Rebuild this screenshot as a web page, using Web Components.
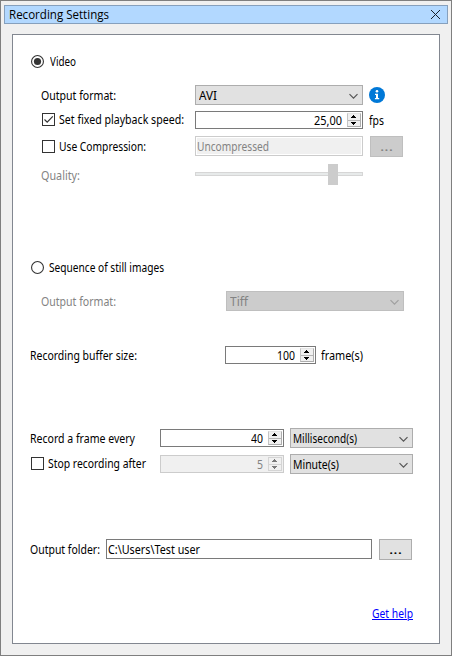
<!DOCTYPE html>
<html lang="en">
<head>
<meta charset="utf-8">
<title>Recording Settings</title>
<style>
html,body{margin:0;height:100%}
body{font:12px/14px "Noto Sans","Open Sans",sans-serif;color:#000;overflow:hidden}
</style>
</head>
<body>
<settings-window></settings-window>
<script>
const define = (name, html, init) => customElements.define(name, class extends HTMLElement {
  connectedCallback() {
    if (this.shadowRoot) return;
    const root = this.attachShadow({mode: 'open'});
    root.innerHTML = '<style>*{box-sizing:border-box}:host{box-sizing:border-box;flex:none}</style>' + html;
    if (this.hasAttribute('gap')) this.style.marginLeft = this.getAttribute('gap') + 'px';
    if (this.hasAttribute('drop')) this.style.marginTop = this.getAttribute('drop') + 'px';
    if (init) init(this, root);
  }
});
const size = el => { el.style.width = el.getAttribute('w') + 'px'; };

// Label condensed horizontally to fill its width.
define('ui-text', `<style>:host{display:block;white-space:pre;height:14px;line-height:14px}span{display:inline-block;transform-origin:0 0}
:host([off]){color:#838383}:host([link]){color:#00f}:host([link]) span{text-decoration:underline;text-underline-offset:1px;text-decoration-thickness:1px}</style><span><slot></slot></span>`, (el, root) => {
  const want = +el.getAttribute('w');
  if (!want) return;
  const span = root.querySelector('span');
  const have = span.getBoundingClientRect().width;
  span.style.transform = 'scaleX(' + want / have + ')';
  size(el);
});
define('ui-row', `<style>:host{display:flex;align-items:flex-start;height:var(--h);padding-left:var(--left)}</style><slot></slot>`);
define('ui-radio', `<style>:host{display:block;width:13px;height:13px}svg{display:block}circle.dot{display:none}:host([on]) .dot{display:block}</style>
<svg width="13" height="13"><circle cx="6.5" cy="6.5" r="5.95" fill="#fff" stroke="#333" stroke-width="1.1"/><circle class="dot" cx="6.5" cy="6.5" r="3.6" fill="#333"/></svg>`);
define('ui-check', `<style>:host{display:block;width:13px;height:13px;border:1px solid #333;background:#fff}svg{display:none}:host([on]) svg{display:block}</style>
<svg width="11" height="11"><path d="M1.5 5.5L4.2 8.2L9.8 2.4" fill="none" stroke="#333" stroke-width="1.2"/></svg>`);
define('ui-select', `<style>:host{display:flex;height:20px;border:1px solid #adadad;background:#e1e1e1;padding:3px 4px 0 2px;justify-content:space-between}
:host([off]){background:#ccc;border-color:#bfbfbf;color:#838383}svg{display:block;margin-top:4px}path{stroke:#555}:host([off]) path{stroke:#a0a0a0}</style>
<slot></slot><svg width="9" height="7"><path d="M.5 1.2L4.5 5.2L8.5 1.2" fill="none" stroke-width="1.2"/></svg>`, size);
define('ui-field', `<style>:host{display:block;height:20px;border:1px solid #7a7a7a;background:#fff;padding:3px 0 0 1px}
:host([off]){border-color:#ccc;background:#f0f0f0;box-shadow:inset 0 0 0 1px #fff;color:#838383}</style><slot></slot>`, size);
define('ui-spin', `<style>:host{display:flex;height:18px;border:1px solid #7a7a7a;background:#fff;justify-content:flex-end;padding:1px}
:host([off]){border-color:#ccc;background:#f0f0f0;color:#838383}
.v{margin:1px 5px 0 0}.b{width:14px;height:14px;background:#f0f0f0;border:1px solid #adadad;border-top-color:#e5e5e5;border-left-color:#c4c4c4}
:host([off]) .b{border-color:#d4d4d4}
svg{display:block}path{fill:#000}rect{fill:#b5b5b5}:host([off]) path{fill:#777}:host([off]) rect{fill:#d4d4d4}</style>
<div class="v"><slot></slot></div><div class="b"><svg width="12" height="12" shape-rendering="crispEdges"><path d="M5 1h1v1h1v1h1v1H3V3h1V2h1zM3 8h5v1H7v1H6v1H5v-1H4V9H3z"/><rect y="6" width="12" height="1"/></svg></div>`, size);
define('ui-button', `<style>:host{display:flex;width:33px;height:21px;border:1px solid #adadad;background:#e1e1e1;justify-content:center;padding-top:3px}
:host([off]){background:#ccc;border-color:#bfbfbf;color:#838383}</style><slot></slot>`);
define('ui-info', `<style>:host{display:block;width:16px;height:16px}svg{display:block}</style>
<svg width="16" height="16"><circle cx="8" cy="8" r="8" fill="#0078d7"/><circle cx="8" cy="4.3" r="1.3" fill="#fff"/><path d="M6 6.8h3v4.2h1.2v1.3H5.9V11H7V8H6z" fill="#fff"/></svg>`);
define('ui-slider', `<style>:host{display:grid;width:168px;height:21px;grid-template-columns:133px 10px 25px;align-items:start}
i{height:4px;margin-top:8px;background:#e7eaea;border:1px solid #d6d6d6}.l{border-right:0}.r{border-left:0}b{height:21px;background:#ccc}</style><i class="l"></i><b></b><i class="r"></i>`);
define('title-bar', `<style>:host{display:flex;justify-content:space-between;height:19px;border:1px solid #86a0bd;background:#b2d8ff;padding:0 7px 0 4px;font-family:"Open Sans","Noto Sans",sans-serif;font-size:12px}
svg{display:block;margin-top:4px}</style><slot></slot><svg width="9" height="9"><path d="M0 0L9 9M9 0L0 9" stroke="#16202c" stroke-width="1"/></svg>`);
define('settings-panel', `<style>:host{display:block;width:428px;height:610px;margin:10px 0 0 11px;border:1px solid #828790;background:#fff;padding-top:20px}</style><slot></slot>`);

define('settings-window', `<style>:host{display:block;width:452px;height:656px;border:1px solid #7f7f7f;background:#f0f0f0;padding-top:4px}
title-bar{margin:0 3px}</style>
<title-bar><ui-text w="100" drop="2">Recording Settings</ui-text></title-bar>
<settings-panel>
 <ui-row style="--left:18px;--h:30px"><ui-radio on></ui-radio><ui-text w="26" gap="6">Video</ui-text></ui-row>
 <ui-row style="--left:28px;--h:26px"><ui-text w="75" drop="4">Output format:</ui-text><ui-select w="168" gap="79"><ui-text w="18" gap="1">AVI</ui-text></ui-select><ui-info gap="6" drop="2"></ui-info></ui-row>
 <ui-row style="--left:29px;--h:25px"><ui-check on drop="2"></ui-check><ui-text w="125" gap="4" drop="2">Set fixed playback speed:</ui-text><ui-spin w="168" gap="11"><ui-text w="28">25,00</ui-text></ui-spin><ui-text w="15" gap="6" drop="3">fps</ui-text></ui-row>
 <ui-row style="--left:29px;--h:28px"><ui-check drop="4"></ui-check><ui-text w="87" gap="4" drop="4">Use Compression:</ui-text><ui-field off w="168" gap="49"><ui-text w="72">Uncompressed</ui-text></ui-field><ui-button off gap="7"><ui-text w="13">...</ui-text></ui-button></ui-row>
 <ui-row style="--left:28px;--h:97px"><ui-text off w="39" drop="5">Quality:</ui-text><ui-slider gap="115"></ui-slider></ui-row>
 <ui-row style="--left:18px;--h:30px"><ui-radio></ui-radio><ui-text w="115" gap="5">Sequence of still images</ui-text></ui-row>
 <ui-row style="--left:28px;--h:55px"><ui-text off w="75" drop="4">Output format:</ui-text><ui-select off w="178" gap="110"><ui-text w="18" gap="1">Tiff</ui-text></ui-select></ui-row>
 <ui-row style="--left:17px;--h:82px"><ui-text w="107" drop="3">Recording buffer size:</ui-text><ui-spin w="91" gap="88"><ui-text w="18">100</ui-text></ui-spin><ui-text w="42" gap="5" drop="3">frame(s)</ui-text></ui-row>
 <ui-row style="--left:17px;--h:26px"><ui-text w="105" drop="4">Record a frame every</ui-text><ui-spin w="124" gap="25" drop="1"><ui-text w="12">40</ui-text></ui-spin><ui-select w="123" gap="6"><ui-text w="64">Millisecond(s)</ui-text></ui-select></ui-row>
 <ui-row style="--left:18px;--h:85px"><ui-check drop="3"></ui-check><ui-text w="98" gap="4" drop="3">Stop recording after</ui-text><ui-spin off w="124" gap="14" drop="1"><ui-text w="6">5</ui-text></ui-spin><ui-select w="123" gap="6"><ui-text w="46">Minute(s)</ui-text></ui-select></ui-row>
 <ui-row style="--left:17px;--h:68px"><ui-text w="70" drop="4">Output folder:</ui-text><ui-field w="266" gap="6"><ui-text w="92">C:\\Users\\Test user</ui-text></ui-field><ui-button gap="7"><ui-text w="13">...</ui-text></ui-button></ui-row>
 <ui-row style="--left:359px;--h:14px"><ui-text link w="41">Get help</ui-text></ui-row>
</settings-panel>`);
</script>
</body>
</html>
